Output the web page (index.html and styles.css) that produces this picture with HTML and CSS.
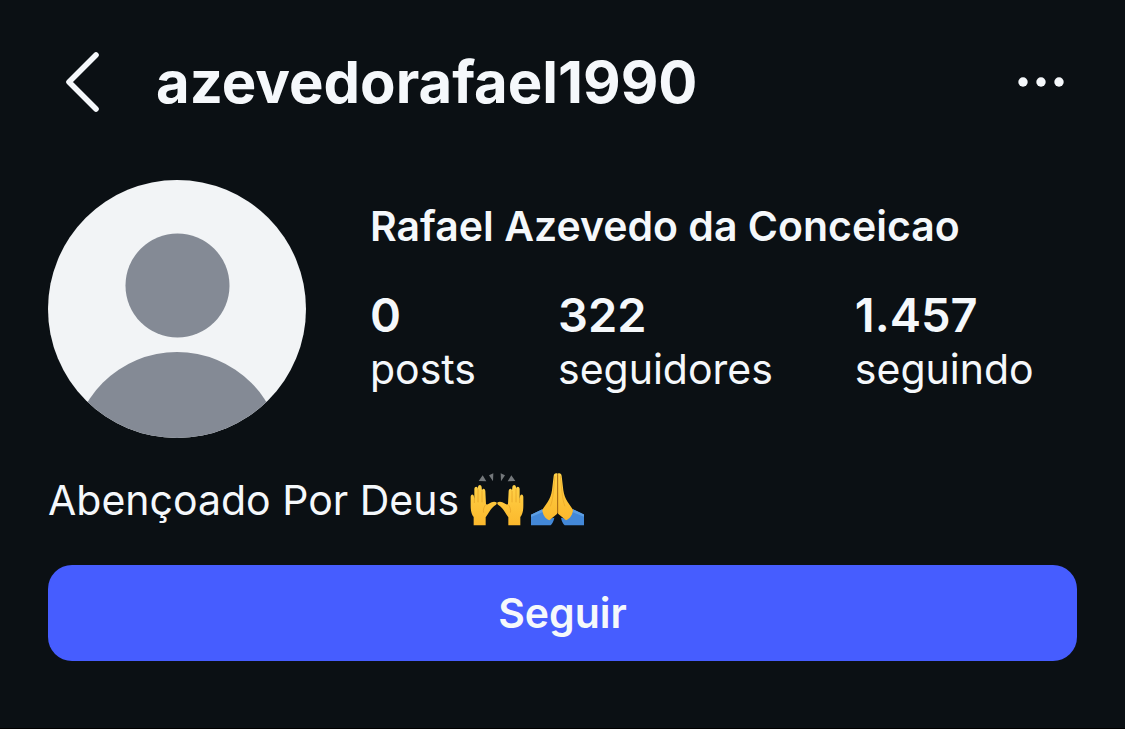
FILE: index.html
```html
<!DOCTYPE html>
<html lang="pt-BR">
<head>
	<meta charset="UTF-8">
	<meta name="viewport" content="width=device-width, initial-scale=1">
	<title>azevedorafael1990</title>
	<link rel="stylesheet" href="styles.css">
</head>
<body>
	<header class="topbar">
		<button class="icon-btn" type="button" aria-label="Voltar">
			<svg width="40" height="64" viewBox="0 0 40 64" fill="none" stroke="#f5f8fb" stroke-width="5.600" stroke-linecap="round" stroke-linejoin="round">
				<path d="M34 5L7 32L34 59"/>
			</svg>
		</button>
		<h1 class="username">azevedorafael1990</h1>
		<button class="icon-btn" type="button" aria-label="Mais opções">
			<svg width="48" height="12" viewBox="0 0 48 12" fill="#f5f8fb">
				<circle cx="6" cy="6" r="4.7"/>
				<circle cx="24" cy="6" r="4.7"/>
				<circle cx="42" cy="6" r="4.7"/>
			</svg>
		</button>
	</header>

	<main class="profile">
		<section class="summary">
			<svg class="avatar" viewBox="0 0 258 258" role="img" aria-label="Foto do perfil">
				<defs>
					<clipPath id="round"><circle cx="129" cy="129" r="129"/></clipPath>
				</defs>
				<g clip-path="url(#round)">
					<rect width="258" height="258" fill="#f2f4f6"/>
					<circle cx="129.500" cy="105.500" r="52" fill="#848a95"/>
					<circle cx="129" cy="277" r="105" fill="#848a95"/>
				</g>
			</svg>
			<div class="info">
				<h2 class="name">Rafael Azevedo da Conceicao</h2>
				<ul class="stats">
					<li><a href="#posts"><strong>0</strong><span>posts</span></a></li>
					<li><a href="#seguidores"><strong>322</strong><span>seguidores</span></a></li>
					<li><a href="#seguindo"><strong>1.457</strong><span>seguindo</span></a></li>
				</ul>
			</div>
		</section>

		<p class="bio">
			<span>Abençoado Por Deus</span>
			<!-- raised hands -->
			<svg class="emoji" viewBox="0 0 168 159" role="img" aria-label="Mãos levantadas">
				<defs>
					<linearGradient id="skin" x1="0" y1="0" x2="0" y2="1">
						<stop offset="0" stop-color="#ffd147"/>
						<stop offset="1" stop-color="#fbb82c"/>
					</linearGradient>
					<g id="hand">
						<path fill="url(#skin)" d="M14 157V132C7 124 5 112 5 97V72C5 62 14 62 15 71L16 80V48C17 39 26 39 27 48V43C28 34 37 34 38 43L39 53C40 45 48 46 49 54L51 93C54 96 58 94 62 91C67 87 76 84 82 88C86 93 79 97 73 101C65 107 59 121 50 133V157Z"/>
						<path fill="none" stroke="#e39f22" stroke-width="2" d="M16 78V90M27 48V88M39 54V88M50 95C44 103 42 111 44 119"/>
					</g>
				</defs>
				<path fill="#74787b" d="M41 7L52 25L29 24ZM60 7L73 1L72 25ZM95 1L108 7L96 25ZM127 7L139 24L116 25Z"/>
				<use href="#hand"/>
				<use href="#hand" transform="translate(168 0) scale(-1 1)"/>
			</svg>
			<!-- folded hands -->
			<svg class="emoji" viewBox="0 0 160 159" role="img" aria-label="Mãos juntas">
				<g id="arm">
					<path fill="#4388d8" d="M0 125L34 109L52 138L70 134C68 145 64 152 59 157H0Z"/>
					<path fill="#5d9ee2" d="M0 125L34 109L38 116L0 132Z"/>
					<path fill="url(#skin)" d="M80 2C73 -1 69 2 68 9L63 52C61 66 57 77 50 87L34 110C35 124 42 136 55 142L77 124C79 122 80 118 80 114Z"/>
					<path fill="none" stroke="#e8a426" stroke-width="2" d="M72 9L67 57C65 76 63 87 58 100"/>
				</g>
				<use href="#arm" transform="translate(160 0) scale(-1 1)"/>
				<path fill="none" stroke="#a96812" stroke-width="3" d="M80 4V120"/>
			</svg>
		</p>

		<button class="follow" type="button">Seguir</button>
	</main>
</body>
</html>
```
FILE: styles.css
```css
*{
	margin: 0;
	padding: 0;
	box-sizing: border-box;
}
body{
	min-height: 100vh;
	padding: 40px 48px 67px;
	border-bottom: 1px solid #000;
	background: #0b1014;
	color: #f5f8fb;
	font-family: Inter, "Liberation Sans", sans-serif;
	font-size: 41px;
	line-height: 52px;
}
button{
	border: 0;
	background: none;
	color: inherit;
	font: inherit;
	cursor: pointer;
}
.topbar{
	display: flex;
	align-items: center;
	height: 84px;
	padding: 0 12px 0 14px;
}
.icon-btn{
	display: flex;
}
.username{
	flex: 1;
	margin-left: 54px;
	font-size: 58px;
	font-weight: 700;
	line-height: 84px;
}
.summary{
	display: flex;
	gap: 64px;
	margin-top: 56px;
}
.avatar{
	flex: none;
	width: 258px;
	height: 258px;
}
.info{
	padding-top: 20px;
}
.name{
	font-size: 41px;
	font-weight: 600;
}
.stats{
	display: flex;
	gap: 82px;
	margin-top: 35px;
	list-style: none;
}
.stats a{
	display: block;
	color: inherit;
	text-decoration: none;
}
.stats strong,
.stats span{
	display: block;
}
.stats strong{
	font-size: 47px;
	font-weight: 600;
	line-height: 56px;
}
.bio{
	display: flex;
	align-items: center;
	gap: 6px;
	margin-top: 35px;
}
.bio span{
	margin-right: 4px;
}
.emoji{
	height: 53px;
}
.follow{
	display: block;
	width: 100%;
	height: 96px;
	margin-top: 39px;
	border-radius: 24px;
	background: #465dff;
	font-weight: 600;
}
```
